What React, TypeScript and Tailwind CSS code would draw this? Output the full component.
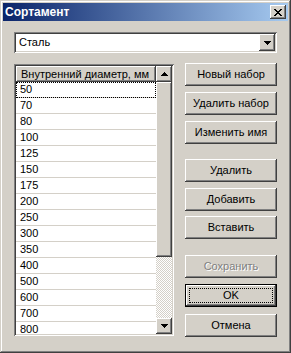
import React from "react";

const sizes = ["50", "70", "80", "100", "125", "150", "175", "200", "250", "300", "350", "400", "500", "600", "700", "800"];

const raised =
  "shadow-[inset_-1px_-1px_0_#404040,inset_1px_1px_0_#ffffff,inset_-2px_-2px_0_#808080,inset_2px_2px_0_#d4d0c8]";
const sunken =
  "shadow-[inset_1px_1px_0_#808080,inset_-1px_-1px_0_#ffffff,inset_2px_2px_0_#404040,inset_-2px_-2px_0_#d4d0c8]";

function Arrow({ up }: { up?: boolean }) {
  return (
    <svg width="7" height="4" viewBox="0 0 7 4" shapeRendering="crispEdges">
      {up ? <path d="M3 0h1v1h1v1h1v1h1v1H0V3h1V2h1V1h1z" fill="#000" /> : <path d="M0 0h7v1H6v1H5v1H4v1H3V3H2V2H1V1H0z" fill="#000" />}
    </svg>
  );
}

function Btn({ label, className = "", disabled, def }: { label: string; className?: string; disabled?: boolean; def?: boolean }) {
  if (def) {
    return (
      <div
        className={`flex h-[23px] w-[92px] bg-[#d4d0c8] p-[4px] shadow-[inset_0_0_0_1px_#000000,inset_-2px_-2px_0_#404040,inset_2px_2px_0_#ffffff,inset_-3px_-3px_0_#808080] ${className}`}
      >
        <div className="flex flex-1 items-center justify-center border border-dotted border-black text-[11px] leading-none text-black">
          {label}
        </div>
      </div>
    );
  }
  return (
    <div
      className={`flex h-[23px] w-[92px] items-center justify-center bg-[#d4d0c8] text-[11px] leading-none ${raised} ${
        disabled ? "text-[#808080] [text-shadow:1px_1px_0_#ffffff]" : "text-black"
      } ${className}`}
    >
      {label}
    </div>
  );
}

export default function App() {
  return (
    <div
      className="flex h-[353px] w-[291px] flex-col bg-[#d4d0c8] p-[3px] shadow-[inset_-1px_-1px_0_#404040,inset_1px_1px_0_#d4d0c8,inset_-2px_-2px_0_#808080,inset_2px_2px_0_#ffffff]"
      style={{ fontFamily: '"Liberation Sans", Arial, sans-serif' }}
    >
      {/* title bar */}
      <div className="flex h-[18px] items-center justify-between bg-[linear-gradient(to_right,#0a246a,#a6caf0)] pl-[2px] pr-[2px]">
        <span className="text-[12px] font-bold leading-none text-white">Сортамент</span>
        <div className={`flex h-[14px] w-[16px] items-center justify-center bg-[#d4d0c8] ${raised}`}>
          <svg width="8" height="7" viewBox="0 0 8 7" shapeRendering="crispEdges">
            <path
              d="M0 0h2v1h1v1h2V1h1V0h2v1H7v1H6v1H5v1h1v1h1v1h1v1H6V6H5V5H3v1H2v1H0V6h1V5h1V4h1V3H2V2H1V1H0z"
              fill="#000"
            />
          </svg>
        </div>
      </div>

      <div className="flex flex-1 flex-col px-[11px]">
        {/* combobox */}
        <div className={`mt-[11px] flex h-[21px] items-center bg-white p-[2px] ${sunken}`}>
          <span className="flex-1 pl-[3px] text-[11px] leading-none text-black">Сталь</span>
          <div className={`flex h-[17px] w-[16px] items-center justify-center bg-[#d4d0c8] ${raised}`}>
            <Arrow />
          </div>
        </div>

        <div className="mt-[10px] flex justify-between">
          {/* list view */}
          <div className={`mt-[1px] flex h-[272px] w-[160px] bg-white p-[2px] ${sunken}`}>
            <div className="flex flex-1 flex-col overflow-hidden">
              <div className={`flex h-[16px] shrink-0 items-center bg-[#d4d0c8] pl-[5px] text-[11px] leading-none text-black ${raised}`}>
                Внутренний диаметр, мм
              </div>
              {sizes.map((s, i) => (
                <div
                  key={s}
                  className={`flex h-[16px] shrink-0 items-center border-b border-[#d4d0c8] pl-[4px] text-[11px] leading-none text-black ${
                    i === 0 ? "outline outline-1 -outline-offset-1 outline-dotted outline-black" : ""
                  }`}
                >
                  {s}
                </div>
              ))}
            </div>
            <div className="flex w-[16px] flex-col">
              <div className={`flex h-[16px] items-center justify-center bg-[#d4d0c8] ${raised}`}>
                <Arrow up />
              </div>
              <div className={`h-[175px] bg-[#d4d0c8] ${raised}`} />
              <div className="flex-1 bg-[repeating-conic-gradient(#d4d0c8_0%_25%,#ffffff_0%_50%)] bg-size-[2px_2px]" />
              <div className={`flex h-[16px] items-center justify-center bg-[#d4d0c8] ${raised}`}>
                <Arrow />
              </div>
            </div>
          </div>

          {/* buttons */}
          <div className="flex flex-col">
            <Btn label="Новый набор" />
            <Btn label="Удалить набор" className="mt-[6px]" />
            <Btn label="Изменить имя" className="mt-[6px]" />
            <Btn label="Удалить" className="mt-[15px]" />
            <Btn label="Добавить" className="mt-[6px]" />
            <Btn label="Вставить" className="mt-[5px]" />
            <Btn label="Сохранить" className="mt-[16px]" disabled />
            <Btn label="OK" className="mt-[6px]" def />
            <Btn label="Отмена" className="mt-[7px]" />
          </div>
        </div>
      </div>
    </div>
  );
}
